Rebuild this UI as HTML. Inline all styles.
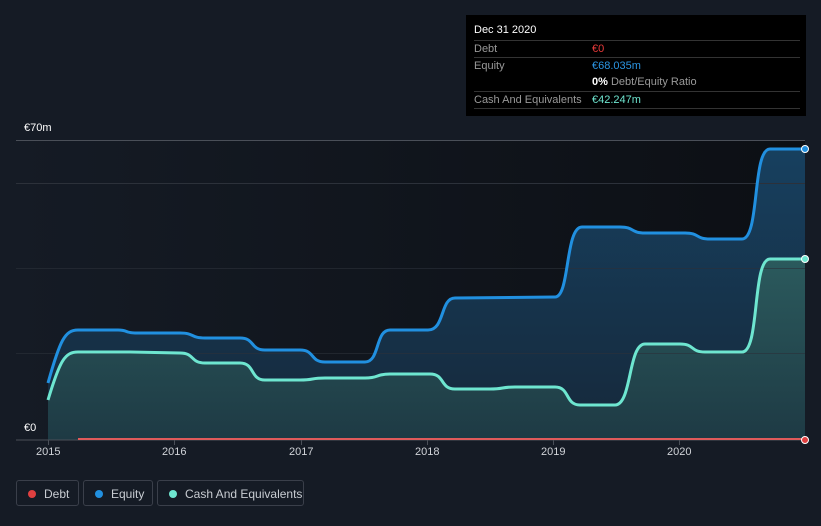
<!DOCTYPE html>
<html><head><style>
body{margin:0;width:821px;height:526px;background:#151b25;font-family:"Liberation Sans",sans-serif;overflow:hidden;position:relative}
.tt{position:absolute;left:466px;top:15px;width:340px;height:101px;background:#000;color:#fff;font-size:11px}
.tt .r{position:absolute;left:8px;right:6px;border-top:1px solid #333;height:17px;line-height:17px;color:#999}
.tt .v{position:absolute;left:118px}
.leg{position:absolute;top:480px;height:26px;border:1px solid #3a3f4a;border-radius:3px;color:#c8ccd2;font-size:12px;line-height:26px;box-sizing:border-box}
.leg i{position:absolute;left:11px;top:9px;width:8px;height:8px;border-radius:50%}
.leg span{position:absolute;left:27px}
.yr{position:absolute;top:446px;color:#d0d3d8;font-size:11px}
</style></head><body>
<svg width="821" height="526" style="position:absolute;left:0;top:0">
<defs>
<linearGradient id="bg" x1="0" x2="1" y1="0" y2="0"><stop offset="0" stop-color="#151b25"/><stop offset="1" stop-color="#0c0f14"/></linearGradient>
<linearGradient id="eq" x1="0" x2="0" y1="0" y2="1"><stop offset="0" stop-color="#17405f"/><stop offset="1" stop-color="#16283a"/></linearGradient>
<linearGradient id="ca" x1="0" x2="0" y1="0" y2="1"><stop offset="0" stop-color="#2b5a5d"/><stop offset="1" stop-color="#1e3a44"/></linearGradient>
</defs>
<rect x="16" y="140" width="789" height="300" fill="url(#bg)"/>
<path d="M48 383 C60 340 65 330 78 330 L118 330 C128 330 125 333 135 333 L180 333 C195 333 190 338 205 338 L240 338 C255 338 250 350 265 350 L300 350 C315 350 310 362 325 362 L365 362 C380 362 375 330 390 330 L428 330 C445 330 440 298 455 298 L555 297 C570 297 565 227 582 227 L620 227 C635 227 630 233 645 233 L685 233 C700 233 695 239 710 239 L742 239 C760 239 752 149 770 149 L805 149 L805 440 L48 440 Z" fill="url(#eq)"/>
<path d="M48 400 C60 360 65 352 78 352 L130 352 L180 353 C195 353 190 363 205 363 L240 363 C255 363 250 380 265 380 L300 380 C315 380 310 378 325 378 L365 378 C380 378 375 374 390 374 L430 374 C445 374 440 389 455 389 L490 389 C505 389 500 387 515 387 L555 387 C570 387 565 405 580 405 L615 405 C632 405 628 344 645 344 L680 344 C695 344 690 352 705 352 L742 352 C760 352 752 259 770 259 L805 259 L805 440 L48 440 Z" fill="url(#ca)"/>
<line x1="16" y1="140.5" x2="805" y2="140.5" stroke="#4a4f58"/>
<line x1="16" y1="183.5" x2="805" y2="183.5" stroke="#2c313a"/>
<line x1="16" y1="268.5" x2="805" y2="268.5" stroke="#2c313a" opacity=".6"/>
<line x1="16" y1="353.5" x2="805" y2="353.5" stroke="#2c313a" opacity=".6"/>
<path d="M48 383 C60 340 65 330 78 330 L118 330 C128 330 125 333 135 333 L180 333 C195 333 190 338 205 338 L240 338 C255 338 250 350 265 350 L300 350 C315 350 310 362 325 362 L365 362 C380 362 375 330 390 330 L428 330 C445 330 440 298 455 298 L555 297 C570 297 565 227 582 227 L620 227 C635 227 630 233 645 233 L685 233 C700 233 695 239 710 239 L742 239 C760 239 752 149 770 149 L805 149" fill="none" stroke="#2190e0" stroke-width="3"/>
<path d="M48 400 C60 360 65 352 78 352 L130 352 L180 353 C195 353 190 363 205 363 L240 363 C255 363 250 380 265 380 L300 380 C315 380 310 378 325 378 L365 378 C380 378 375 374 390 374 L430 374 C445 374 440 389 455 389 L490 389 C505 389 500 387 515 387 L555 387 C570 387 565 405 580 405 L615 405 C632 405 628 344 645 344 L680 344 C695 344 690 352 705 352 L742 352 C760 352 752 259 770 259 L805 259" fill="none" stroke="#6ee6d0" stroke-width="3"/>
<line x1="16" y1="440" x2="805" y2="440" stroke="#4a4f58"/>
<line x1="78" y1="439" x2="805" y2="439" stroke="#e05a5a" stroke-width="2"/>
<g stroke="#4a4f58"><line x1="48.5" y1="440" x2="48.5" y2="445"/><line x1="174.5" y1="440" x2="174.5" y2="445"/><line x1="301.5" y1="440" x2="301.5" y2="445"/><line x1="427.5" y1="440" x2="427.5" y2="445"/><line x1="553.5" y1="440" x2="553.5" y2="445"/><line x1="679.5" y1="440" x2="679.5" y2="445"/></g>
<circle cx="805" cy="149" r="3.5" fill="#2190e0" stroke="#fff" stroke-width="1"/>
<circle cx="805" cy="259" r="3.5" fill="#6ee6d0" stroke="#fff" stroke-width="1"/>
<circle cx="805" cy="440" r="3.5" fill="#e04040" stroke="#fff" stroke-width="1"/>
</svg>
<div style="position:absolute;left:24px;top:122px;color:#fff;font-size:11px">€70m</div>
<div style="position:absolute;left:24px;top:422px;color:#fff;font-size:11px">€0</div>
<div class="yr" style="left:36px">2015</div><div class="yr" style="left:162px">2016</div><div class="yr" style="left:289px">2017</div><div class="yr" style="left:415px">2018</div><div class="yr" style="left:541px">2019</div><div class="yr" style="left:667px">2020</div>
<div class="tt">
<div style="position:absolute;left:8px;top:9px;font-size:11px">Dec 31 2020</div>
<div class="r" style="top:25px">Debt<span class="v" style="color:#e83a3a">€0</span></div>
<div class="r" style="top:42px">Equity<span class="v" style="color:#2b95e3">€68.035m</span></div>
<div class="r" style="top:59px;border-top:none"><span class="v"><b style="color:#fff">0%</b> Debt/Equity Ratio</span></div>
<div class="r" style="top:76px">Cash And Equivalents<span class="v" style="color:#6ee6d0">€42.247m</span></div>
<div style="position:absolute;left:8px;right:6px;top:93px;border-top:1px solid #333"></div>
</div>
<div class="leg" style="left:16px;width:63px"><i style="background:#e04040"></i><span>Debt</span></div>
<div class="leg" style="left:83px;width:70px"><i style="background:#2190e0"></i><span>Equity</span></div>
<div class="leg" style="left:157px;width:147px"><i style="background:#6ee6d0"></i><span>Cash And Equivalents</span></div>
</body></html>
